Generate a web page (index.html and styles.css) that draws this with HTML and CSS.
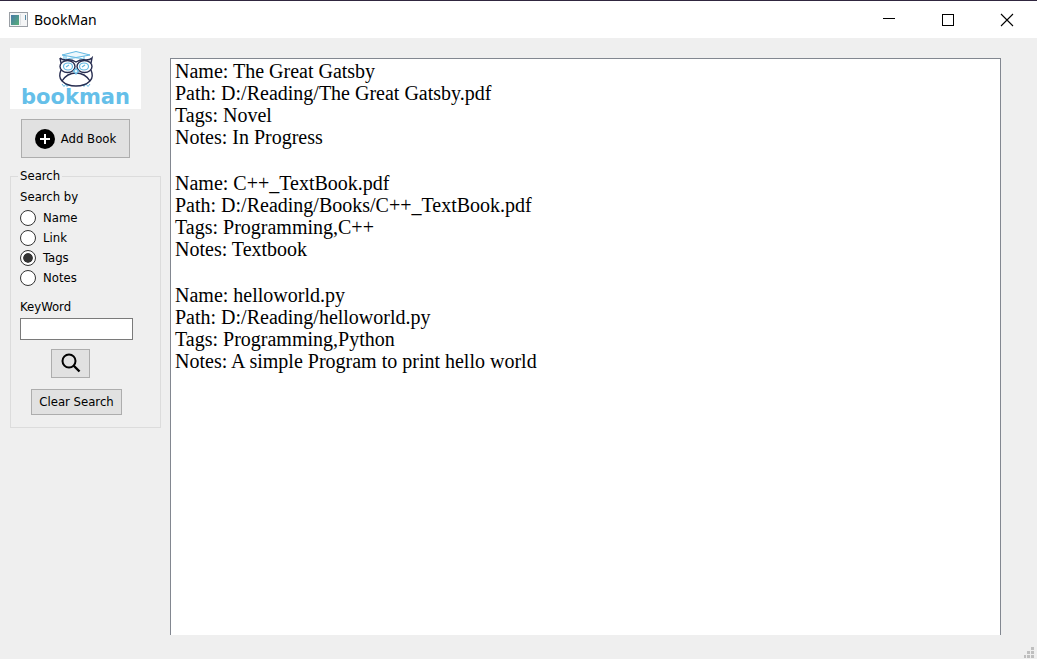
FILE: index.html
```html
<!DOCTYPE html>
<html lang="en">
<head>
<meta charset="utf-8">
<title>BookMan</title>
<link rel="stylesheet" href="styles.css">
</head>
<body>
<header class="titlebar">
  <svg class="app-icon" width="19" height="15" viewBox="0 0 19 15" aria-hidden="true">
    <defs><linearGradient id="screen" x1="0" y1="0" x2="1" y2="1"><stop offset="0" stop-color="#4779a8"/><stop offset="1" stop-color="#58b078"/></linearGradient></defs>
    <rect x=".5" y=".5" width="18" height="14" fill="#f4f5f6" stroke="#9a9fa5"/>
    <rect x="2" y="3" width="8" height="10" fill="url(#screen)"/>
    <path d="M11.500 2v11" stroke="#dcdfe2"/>
    <path d="M16.500 3v5" stroke="#568aa5"/>
  </svg>
  <h1 class="title">BookMan</h1>
  <div class="window-buttons">
    <button class="window-button" type="button" aria-label="Minimize"><svg width="12" height="12" viewBox="0 0 12 12"><path d="M0 4.500h12" stroke="#000"/></svg></button>
    <button class="window-button" type="button" aria-label="Maximize"><svg width="12" height="12" viewBox="0 0 12 12"><rect x=".5" y=".5" width="11" height="11" fill="none" stroke="#000"/></svg></button>
    <button class="window-button" type="button" aria-label="Close"><svg width="12" height="12" viewBox="0 0 12 12"><path d="M0 0l12 12M12 0L0 12" stroke="#000" stroke-width="1.100"/></svg></button>
  </div>
</header>
<main class="workspace">
  <aside class="sidebar">
    <div class="logo">
      <svg width="38" height="40" viewBox="0 0 38 40" fill="none" aria-hidden="true">
        <g stroke="#63b9e3">
          <path d="M5 5L19 1.500 33 5 19 7.500z" fill="#eef8fd"/>
          <path d="M9 6v3.500Q19 6 27 9.500V6M7 5v6"/>
          <path d="M5 34l2 2.500 2-2.500M9 34l1 2.500 2-2.500M26 34l1 2.500 2-2.500M29 34l2 2.500 2-2.500"/>
        </g>
        <g stroke="#272d50" stroke-width="1.400">
          <path d="M3 8Q5 10 9 10Q14 9 19 12Q24 9 29 10Q33 10 35 8L34 13"/>
          <path d="M3 8l1 5M4 20Q1 27 5 31Q10 36 19 36Q28 36 33 31Q37 27 34 20"/>
          <path d="M5 31Q10 23 19 23Q28 23 33 31"/>
          <ellipse cx="10.500" cy="16.500" rx="7.500" ry="6"/>
          <ellipse cx="27.500" cy="16.500" rx="7.500" ry="6"/>
        </g>
        <g stroke="#63b9e3" stroke-width="1.200">
          <ellipse cx="11" cy="16.500" rx="4.500" ry="3.500"/>
          <ellipse cx="27" cy="16.500" rx="4.500" ry="3.500"/>
          <path d="M9 17l3-2M25 17l3-2"/>
          <path d="M19 18.500l2.500 2.500-2.500 3-2.500-3z" fill="#e9f7fd"/>
        </g>
      </svg>
      <span class="logo-text">bookman</span>
    </div>
    <button class="button add-button" type="button">
      <svg width="20" height="20" viewBox="0 0 20 20" aria-hidden="true"><circle cx="10" cy="10" r="10"/><path d="M10 5v10M5 10h10" stroke="#fff" stroke-width="2"/></svg>
      Add Book
    </button>
    <fieldset class="search">
      <legend class="search-legend">Search</legend>
      <div class="options" role="radiogroup" aria-labelledby="search-by">
        <span class="caption" id="search-by">Search by</span>
        <label class="option"><input class="radio" type="radio" name="field">Name</label>
        <label class="option"><input class="radio" type="radio" name="field">Link</label>
        <label class="option"><input class="radio" type="radio" name="field" checked>Tags</label>
        <label class="option"><input class="radio" type="radio" name="field">Notes</label>
      </div>
      <div class="keyword">
        <label class="caption" for="keyword">KeyWord</label>
        <input class="keyword-input" id="keyword" type="text">
        <button class="button find-button" type="button" aria-label="Search"><svg width="20" height="20" viewBox="0 0 20 20" fill="none" stroke="#000"><circle cx="8" cy="7" r="6.500" stroke-width="2"/><path d="M12.500 11.500l6 6" stroke-width="2.400"/></svg></button>
        <button class="button clear-button" type="button">Clear Search</button>
      </div>
    </fieldset>
  </aside>
  <section class="results" aria-label="Books">
    <p class="book">Name: The Great Gatsby<br>Path: D:/Reading/The Great Gatsby.pdf<br>Tags: Novel<br>Notes: In Progress</p>
    <p class="book">Name: C++_TextBook.pdf<br>Path: D:/Reading/Books/C++_TextBook.pdf<br>Tags: Programming,C++<br>Notes: Textbook</p>
    <p class="book">Name: helloworld.py<br>Path: D:/Reading/helloworld.py<br>Tags: Programming,Python<br>Notes: A simple Program to print hello world</p>
  </section>
</main>
<footer class="statusbar">
  <svg width="10" height="11" viewBox="0 0 10 11" fill="#bfbfbf" aria-hidden="true"><path d="M7 0h3v3H7zM3 4h3v3H3zM7 4h3v3H7zM0 8h2v3H0zM3 8h3v3H3zM7 8h3v3H7z"/></svg>
</footer>
</body>
</html>
```
FILE: styles.css
```css
* {
  box-sizing: border-box;
}

body {
  display: flex;
  flex-direction: column;
  min-height: 100vh;
  margin: 0;
  background: #efefef;
  color: #000;
  font: 13px/18px "DejaVu Sans Condensed", "Noto Sans", sans-serif;
}

svg {
  display: block;
  flex: none;
  overflow: visible;
}

.titlebar {
  display: flex;
  align-items: center;
  height: 38px;
  padding: 0 1px 0 9px;
  border-top: 1px solid #30263f;
  background: #fff;
}

.title {
  margin: 0 0 0 6px;
  font: 14px/20px "Noto Sans", sans-serif;
}

.window-buttons {
  display: flex;
  align-self: stretch;
  margin-left: auto;
}

.window-button {
  display: flex;
  align-items: center;
  justify-content: center;
  width: 59px;
  padding: 0;
  border: 0;
  background: transparent;
}

.workspace {
  display: flex;
  flex: 1;
  gap: 9px;
  padding: 10px 36px 0 10px;
}

.sidebar {
  width: 151px;
}

.logo {
  display: flex;
  flex-direction: column;
  align-items: center;
  width: 131px;
  height: 61px;
  padding-top: 2px;
  background: #fff;
}

.logo-text {
  margin-top: -3px;
  color: #65bfe9;
  font: bold 21px/20px "DejaVu Sans", sans-serif;
}

.button {
  display: flex;
  align-items: center;
  justify-content: center;
  padding: 0;
  border: 1px solid #adadad;
  background: #e1e1e1;
  color: #000;
  font: inherit;
}

.add-button {
  gap: 6px;
  width: 109px;
  height: 39px;
  margin: 10px 0 0 11px;
}

.search {
  min-width: 0;
  margin: 9px 0 0;
  padding: 3px 9px 12px;
  border: 1px solid #dcdcdc;
}

.search-legend {
  margin-left: -2px;
  padding: 0 2px;
}

.options {
  display: flex;
  flex-direction: column;
}

.caption {
  margin-bottom: 2px;
}

.option {
  display: flex;
  align-items: center;
  gap: 7px;
  height: 20px;
}

.radio {
  appearance: none;
  width: 16px;
  height: 16px;
  margin: 0;
  border: 1px solid #333;
  border-radius: 50%;
  background: #fff;
}

.radio:checked {
  padding: 2px;
  background: #333 content-box;
  box-shadow: inset 0 0 0 2px #fff;
}

.keyword {
  display: flex;
  flex-direction: column;
  align-items: center;
  width: 113px;
  margin-top: 10px;
}

.keyword .caption {
  align-self: flex-start;
}

.keyword-input {
  width: 100%;
  height: 22px;
  padding: 0 4px;
  border: 1px solid #7a7a7a;
  background: #fff;
  font: inherit;
}

.find-button {
  width: 39px;
  height: 29px;
  margin: 9px 12px 0 0;
}

.clear-button {
  width: 91px;
  height: 26px;
  margin-top: 11px;
}

.results {
  flex: 1;
  margin-top: 10px;
  padding: 1px 4px;
  border: 1px solid #828790;
  border-bottom: 0;
  background: #fff;
  font: 20px/22px "Liberation Serif", serif;
}

.book {
  margin: 0 0 24px;
}

.statusbar {
  display: flex;
  align-items: flex-end;
  justify-content: flex-end;
  height: 24px;
  padding: 0 3px 1px;
}
```
